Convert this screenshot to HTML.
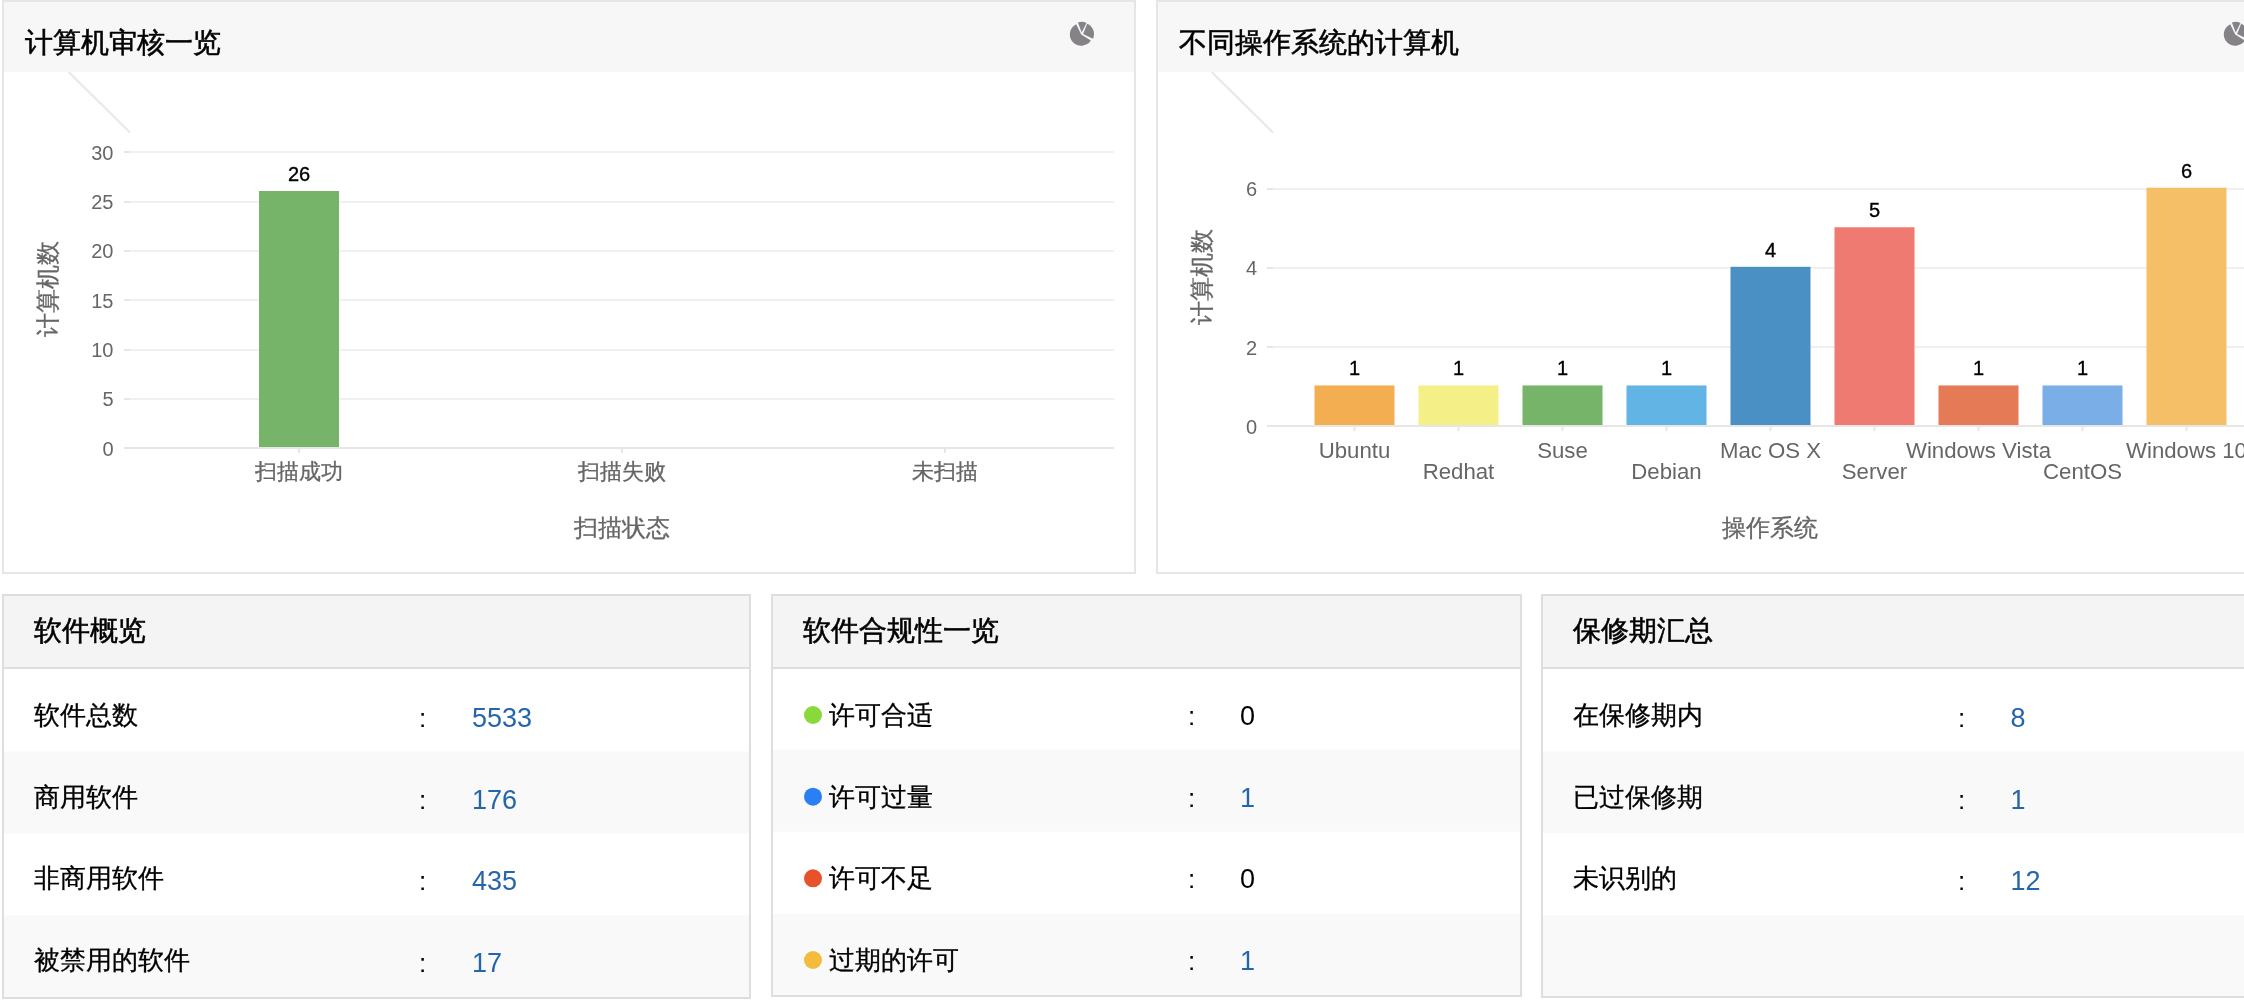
<!DOCTYPE html>
<html><head><meta charset="utf-8"><style>
html,body{margin:0;padding:0;background:#fff;width:2244px;height:1006px;overflow:hidden}
svg{display:block;font-family:"Liberation Sans", sans-serif;will-change:transform}
</style></head><body>
<svg width="2244" height="1006" viewBox="0 0 2244 1006">
<rect x="2" y="0" width="1134" height="574" fill="#e6e6e6"/>
<rect x="4" y="2" width="1130" height="570" fill="#ffffff"/>
<rect x="4" y="2" width="1130" height="70" fill="#f7f7f7"/>
<text x="24.5" y="51.5" font-size="27.8" fill="#000" text-anchor="start" stroke="#000" stroke-width="0.55">计算机审核一览</text>
<line x1="68.6" y1="72" x2="130" y2="132.5" stroke="#e8e8e8" stroke-width="2"/>
<path d="M1081.20,34.40 L1090.87,40.44 A11.4,11.4 0 1 1 1076.20,24.15 ZM1081.70,32.40 L1077.90,22.50 A10.6,10.6 0 0 1 1086.51,22.96 ZM1083.10,33.90 L1087.18,23.79 A10.9,10.9 0 0 1 1092.90,38.68 Z" fill="#858387"/>
<rect x="1156" y="0" width="1134" height="574" fill="#e6e6e6"/>
<rect x="1158" y="2" width="1130" height="570" fill="#ffffff"/>
<rect x="1158" y="2" width="1130" height="70" fill="#f7f7f7"/>
<text x="1178.5" y="51.5" font-size="27.8" fill="#000" text-anchor="start" stroke="#000" stroke-width="0.55">不同操作系统的计算机</text>
<line x1="1211.6" y1="72" x2="1273" y2="132.5" stroke="#e8e8e8" stroke-width="2"/>
<path d="M2235.20,34.40 L2244.87,40.44 A11.4,11.4 0 1 1 2230.20,24.15 ZM2235.70,32.40 L2231.90,22.50 A10.6,10.6 0 0 1 2240.51,22.96 ZM2237.10,33.90 L2241.18,23.79 A10.9,10.9 0 0 1 2246.90,38.68 Z" fill="#858387"/>
<rect x="124" y="447" width="990" height="2" fill="#e6e6e6"/>
<rect x="124" y="447" width="6" height="2" fill="#e6e6e6"/>
<text x="113.5" y="455.6" font-size="20" fill="#666666" text-anchor="end" >0</text>
<rect x="124" y="398" width="990" height="2" fill="#f0f0f0"/>
<rect x="124" y="398" width="6" height="2" fill="#e6e6e6"/>
<text x="113.5" y="406.26700000000005" font-size="20" fill="#666666" text-anchor="end" >5</text>
<rect x="124" y="349" width="990" height="2" fill="#f0f0f0"/>
<rect x="124" y="349" width="6" height="2" fill="#e6e6e6"/>
<text x="113.5" y="356.934" font-size="20" fill="#666666" text-anchor="end" >10</text>
<rect x="124" y="299" width="990" height="2" fill="#f0f0f0"/>
<rect x="124" y="299" width="6" height="2" fill="#e6e6e6"/>
<text x="113.5" y="307.601" font-size="20" fill="#666666" text-anchor="end" >15</text>
<rect x="124" y="250" width="990" height="2" fill="#f0f0f0"/>
<rect x="124" y="250" width="6" height="2" fill="#e6e6e6"/>
<text x="113.5" y="258.26800000000003" font-size="20" fill="#666666" text-anchor="end" >20</text>
<rect x="124" y="201" width="990" height="2" fill="#f0f0f0"/>
<rect x="124" y="201" width="6" height="2" fill="#e6e6e6"/>
<text x="113.5" y="208.935" font-size="20" fill="#666666" text-anchor="end" >25</text>
<rect x="124" y="151" width="990" height="2" fill="#f0f0f0"/>
<rect x="124" y="151" width="6" height="2" fill="#e6e6e6"/>
<text x="113.5" y="159.602" font-size="20" fill="#666666" text-anchor="end" >30</text>
<rect x="298" y="449" width="2" height="4" fill="#e6e6e6"/>
<rect x="621" y="449" width="2" height="4" fill="#e6e6e6"/>
<rect x="944" y="449" width="2" height="4" fill="#e6e6e6"/>
<rect x="259" y="191" width="80" height="256" fill="#75b469"/>
<text x="299" y="181" font-size="20" fill="#000" text-anchor="middle" stroke="#000" stroke-width="0.35">26</text>
<text x="299" y="479" font-size="22" fill="#666666" text-anchor="middle" stroke="#666" stroke-width="0.3">扫描成功</text>
<text x="622" y="479" font-size="22" fill="#666666" text-anchor="middle" stroke="#666" stroke-width="0.3">扫描失败</text>
<text x="945" y="479" font-size="22" fill="#666666" text-anchor="middle" stroke="#666" stroke-width="0.3">未扫描</text>
<text x="622" y="536" font-size="24" fill="#666666" text-anchor="middle" stroke="#666" stroke-width="0.3">扫描状态</text>
<text x="0" y="0" font-size="24" fill="#666666" text-anchor="middle" stroke="#666" stroke-width="0.3" transform="translate(55.7,288.5) rotate(-90)">计算机数</text>
<rect x="1267" y="425" width="1100" height="2" fill="#e6e6e6"/>
<rect x="1267" y="425" width="6" height="2" fill="#e6e6e6"/>
<text x="1257" y="433.6" font-size="20" fill="#666666" text-anchor="end" >0</text>
<rect x="1267" y="346" width="1100" height="2" fill="#f0f0f0"/>
<rect x="1267" y="346" width="6" height="2" fill="#e6e6e6"/>
<text x="1257" y="354.5" font-size="20" fill="#666666" text-anchor="end" >2</text>
<rect x="1267" y="267" width="1100" height="2" fill="#f0f0f0"/>
<rect x="1267" y="267" width="6" height="2" fill="#e6e6e6"/>
<text x="1257" y="275.40000000000003" font-size="20" fill="#666666" text-anchor="end" >4</text>
<rect x="1267" y="188" width="1100" height="2" fill="#f0f0f0"/>
<rect x="1267" y="188" width="6" height="2" fill="#e6e6e6"/>
<text x="1257" y="196.3" font-size="20" fill="#666666" text-anchor="end" >6</text>
<rect x="1314.5" y="385.45" width="80" height="39.55000000000001" fill="#f2ae50"/>
<rect x="1353.5" y="427" width="2" height="4" fill="#e6e6e6"/>
<text x="1354.5" y="375.45" font-size="20" fill="#000" text-anchor="middle" stroke="#000" stroke-width="0.35">1</text>
<text x="1354.5" y="457.7" font-size="22.2" fill="#666666" text-anchor="middle" >Ubuntu</text>
<rect x="1418.5" y="385.45" width="80" height="39.55000000000001" fill="#f5ef87"/>
<rect x="1457.5" y="427" width="2" height="4" fill="#e6e6e6"/>
<text x="1458.5" y="375.45" font-size="20" fill="#000" text-anchor="middle" stroke="#000" stroke-width="0.35">1</text>
<text x="1458.5" y="479.4" font-size="22.2" fill="#666666" text-anchor="middle" >Redhat</text>
<rect x="1522.5" y="385.45" width="80" height="39.55000000000001" fill="#75b469"/>
<rect x="1561.5" y="427" width="2" height="4" fill="#e6e6e6"/>
<text x="1562.5" y="375.45" font-size="20" fill="#000" text-anchor="middle" stroke="#000" stroke-width="0.35">1</text>
<text x="1562.5" y="457.7" font-size="22.2" fill="#666666" text-anchor="middle" >Suse</text>
<rect x="1626.5" y="385.45" width="80" height="39.55000000000001" fill="#62b4e4"/>
<rect x="1665.5" y="427" width="2" height="4" fill="#e6e6e6"/>
<text x="1666.5" y="375.45" font-size="20" fill="#000" text-anchor="middle" stroke="#000" stroke-width="0.35">1</text>
<text x="1666.5" y="479.4" font-size="22.2" fill="#666666" text-anchor="middle" >Debian</text>
<rect x="1730.5" y="266.8" width="80" height="158.2" fill="#4a90c4"/>
<rect x="1769.5" y="427" width="2" height="4" fill="#e6e6e6"/>
<text x="1770.5" y="256.8" font-size="20" fill="#000" text-anchor="middle" stroke="#000" stroke-width="0.35">4</text>
<text x="1770.5" y="457.7" font-size="22.2" fill="#666666" text-anchor="middle" >Mac OS X</text>
<rect x="1834.5" y="227.25" width="80" height="197.75" fill="#ef7a72"/>
<rect x="1873.5" y="427" width="2" height="4" fill="#e6e6e6"/>
<text x="1874.5" y="217.25" font-size="20" fill="#000" text-anchor="middle" stroke="#000" stroke-width="0.35">5</text>
<text x="1874.5" y="479.4" font-size="22.2" fill="#666666" text-anchor="middle" >Server</text>
<rect x="1938.5" y="385.45" width="80" height="39.55000000000001" fill="#e47a56"/>
<rect x="1977.5" y="427" width="2" height="4" fill="#e6e6e6"/>
<text x="1978.5" y="375.45" font-size="20" fill="#000" text-anchor="middle" stroke="#000" stroke-width="0.35">1</text>
<text x="1978.5" y="457.7" font-size="22.2" fill="#666666" text-anchor="middle" >Windows Vista</text>
<rect x="2042.5" y="385.45" width="80" height="39.55000000000001" fill="#7aaee6"/>
<rect x="2081.5" y="427" width="2" height="4" fill="#e6e6e6"/>
<text x="2082.5" y="375.45" font-size="20" fill="#000" text-anchor="middle" stroke="#000" stroke-width="0.35">1</text>
<text x="2082.5" y="479.4" font-size="22.2" fill="#666666" text-anchor="middle" >CentOS</text>
<rect x="2146.5" y="187.70000000000002" width="80" height="237.29999999999998" fill="#f4bf66"/>
<rect x="2185.5" y="427" width="2" height="4" fill="#e6e6e6"/>
<text x="2186.5" y="177.70000000000002" font-size="20" fill="#000" text-anchor="middle" stroke="#000" stroke-width="0.35">6</text>
<text x="2186.5" y="457.7" font-size="22.2" fill="#666666" text-anchor="middle" >Windows 10</text>
<text x="1770" y="536" font-size="24" fill="#666666" text-anchor="middle" stroke="#666" stroke-width="0.3">操作系统</text>
<text x="0" y="0" font-size="24" fill="#666666" text-anchor="middle" stroke="#666" stroke-width="0.3" transform="translate(1210,276.5) rotate(-90)">计算机数</text>
<rect x="2" y="594" width="749" height="405" fill="#dedede"/>
<rect x="4" y="596" width="745" height="401" fill="#ffffff"/>
<rect x="4" y="596" width="745" height="71" fill="#f4f4f4"/>
<rect x="4" y="667" width="745" height="2" fill="#dedede"/>
<text x="34" y="640" font-size="27.8" fill="#000" text-anchor="start" stroke="#000" stroke-width="0.55">软件概览</text>
<rect x="4" y="751.5" width="745" height="82.0" fill="#f9f9f9"/>
<rect x="4" y="915.4" width="745" height="81.60000000000002" fill="#f9f9f9"/>
<text x="34" y="724.0" font-size="26" fill="#000" text-anchor="start" stroke="#000" stroke-width="0.3">软件总数</text>
<text x="419" y="727.0" font-size="26" fill="#000" text-anchor="start" >:</text>
<text x="472" y="727.0" font-size="27" fill="#2565aa" text-anchor="start" >5533</text>
<text x="34" y="805.67" font-size="26" fill="#000" text-anchor="start" stroke="#000" stroke-width="0.3">商用软件</text>
<text x="419" y="808.67" font-size="26" fill="#000" text-anchor="start" >:</text>
<text x="472" y="808.67" font-size="27" fill="#2565aa" text-anchor="start" >176</text>
<text x="34" y="887.34" font-size="26" fill="#000" text-anchor="start" stroke="#000" stroke-width="0.3">非商用软件</text>
<text x="419" y="890.34" font-size="26" fill="#000" text-anchor="start" >:</text>
<text x="472" y="890.34" font-size="27" fill="#2565aa" text-anchor="start" >435</text>
<text x="34" y="969.01" font-size="26" fill="#000" text-anchor="start" stroke="#000" stroke-width="0.3">被禁用的软件</text>
<text x="419" y="972.01" font-size="26" fill="#000" text-anchor="start" >:</text>
<text x="472" y="972.01" font-size="27" fill="#2565aa" text-anchor="start" >17</text>
<rect x="771" y="594" width="751" height="403" fill="#dedede"/>
<rect x="773" y="596" width="747" height="399" fill="#ffffff"/>
<rect x="773" y="596" width="747" height="71" fill="#f4f4f4"/>
<rect x="773" y="667" width="747" height="2" fill="#dedede"/>
<text x="803" y="640" font-size="27.8" fill="#000" text-anchor="start" stroke="#000" stroke-width="0.55">软件合规性一览</text>
<rect x="773" y="749.5" width="747" height="82.20000000000005" fill="#f9f9f9"/>
<rect x="773" y="913.5" width="747" height="81.5" fill="#f9f9f9"/>
<circle cx="813" cy="715.0" r="9" fill="#8ad93c"/>
<text x="829" y="724.0" font-size="26" fill="#000" text-anchor="start" stroke="#000" stroke-width="0.3">许可合适</text>
<text x="1188" y="725.0" font-size="26" fill="#000" text-anchor="start" >:</text>
<text x="1240" y="725.0" font-size="27" fill="#000" text-anchor="start" >0</text>
<circle cx="813" cy="796.67" r="9" fill="#2b7ff5"/>
<text x="829" y="805.67" font-size="26" fill="#000" text-anchor="start" stroke="#000" stroke-width="0.3">许可过量</text>
<text x="1188" y="806.67" font-size="26" fill="#000" text-anchor="start" >:</text>
<text x="1240" y="806.67" font-size="27" fill="#2565aa" text-anchor="start" >1</text>
<circle cx="813" cy="878.34" r="9" fill="#e8522a"/>
<text x="829" y="887.34" font-size="26" fill="#000" text-anchor="start" stroke="#000" stroke-width="0.3">许可不足</text>
<text x="1188" y="888.34" font-size="26" fill="#000" text-anchor="start" >:</text>
<text x="1240" y="888.34" font-size="27" fill="#000" text-anchor="start" >0</text>
<circle cx="813" cy="960.01" r="9" fill="#f5bb3c"/>
<text x="829" y="969.01" font-size="26" fill="#000" text-anchor="start" stroke="#000" stroke-width="0.3">过期的许可</text>
<text x="1188" y="970.01" font-size="26" fill="#000" text-anchor="start" >:</text>
<text x="1240" y="970.01" font-size="27" fill="#2565aa" text-anchor="start" >1</text>
<rect x="1541" y="594" width="750" height="404" fill="#dedede"/>
<rect x="1543" y="596" width="746" height="400" fill="#ffffff"/>
<rect x="1543" y="596" width="746" height="71" fill="#f4f4f4"/>
<rect x="1543" y="667" width="746" height="2" fill="#dedede"/>
<text x="1573" y="640" font-size="27.8" fill="#000" text-anchor="start" stroke="#000" stroke-width="0.55">保修期汇总</text>
<rect x="1543" y="751.5" width="746" height="81.79999999999995" fill="#f9f9f9"/>
<rect x="1543" y="915.4" width="746" height="80.60000000000002" fill="#f9f9f9"/>
<text x="1573" y="724.0" font-size="26" fill="#000" text-anchor="start" stroke="#000" stroke-width="0.3">在保修期内</text>
<text x="1958" y="727.0" font-size="26" fill="#000" text-anchor="start" >:</text>
<text x="2010.5" y="727.0" font-size="27" fill="#2565aa" text-anchor="start" >8</text>
<text x="1573" y="805.67" font-size="26" fill="#000" text-anchor="start" stroke="#000" stroke-width="0.3">已过保修期</text>
<text x="1958" y="808.67" font-size="26" fill="#000" text-anchor="start" >:</text>
<text x="2010.5" y="808.67" font-size="27" fill="#2565aa" text-anchor="start" >1</text>
<text x="1573" y="887.34" font-size="26" fill="#000" text-anchor="start" stroke="#000" stroke-width="0.3">未识别的</text>
<text x="1958" y="890.34" font-size="26" fill="#000" text-anchor="start" >:</text>
<text x="2010.5" y="890.34" font-size="27" fill="#2565aa" text-anchor="start" >12</text>
</svg>
</body></html>
